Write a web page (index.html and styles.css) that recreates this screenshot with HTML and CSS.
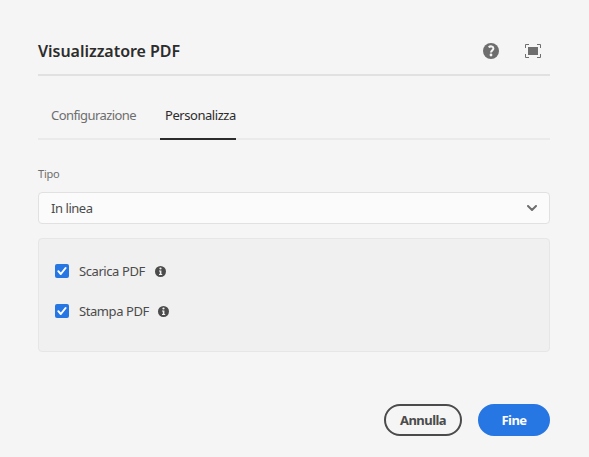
FILE: index.html
```html
<!DOCTYPE html>
<html lang="it">
<head>
<meta charset="utf-8">
<title>Visualizzatore PDF</title>
<link rel="stylesheet" href="styles.css">
</head>
<body>
<main class="dialog">
  <header class="header">
    <h1 class="title"><span>Visualizzatore PDF</span></h1>
    <div class="actions">
      <svg width="16" height="16" viewBox="0 0 16 16"><circle cx="8" cy="8" r="8" fill="#6e6e6e"/><path d="M5.6 4.2C7.5 2.8 10.4 3.2 10.4 5.5C10.4 7.4 8 7.4 8 9.5" fill="none" stroke="#f5f5f5" stroke-width="2"/><circle cx="8" cy="12" r="1.4" fill="#f5f5f5"/></svg>
      <svg width="16" height="14" viewBox="0 0 16 14"><path d="M3 3h10v8H3z" fill="#6e6e6e"/><path d="M.5 4V.5H4M12 .5h3.500V4M15.500 10v3.500H12M4 13.500H.5V10" fill="none" stroke="#6e6e6e"/></svg>
    </div>
  </header>
  <nav class="tabs">
    <a class="tab config"><span>Configurazione</span></a>
    <a class="tab active"><span>Personalizza</span></a>
  </nav>
  <label class="label">Tipo</label>
  <div class="select">
    <span>In linea</span>
    <svg width="10" height="6" viewBox="0 0 10 6"><path d="M1 1l4 4 4-4" fill="none" stroke="#6e6e6e" stroke-width="2" stroke-linecap="round" stroke-linejoin="round"/></svg>
  </div>
  <section class="panel">
    <div class="option">
      <span class="check"><svg width="14" height="14" viewBox="0 0 14 14"><path d="M3.300 7.200l2.500 2.800 4.800-6" fill="none" stroke="#fff" stroke-width="2" stroke-linecap="round" stroke-linejoin="round"/></svg></span>
      <span class="name download">Scarica PDF</span>
      <svg width="11" height="11" viewBox="0 0 11 11"><circle cx="5.500" cy="5.500" r="5.500" fill="#4b4b4b"/><circle cx="5.500" cy="2.500" r="1.100" fill="#f0f0f0"/><path d="M4 4.500h2.400V8H7.200v1H4V8h.8V5.500H4z" fill="#f0f0f0"/></svg>
    </div>
    <div class="option">
      <span class="check"><svg width="14" height="14" viewBox="0 0 14 14"><path d="M3.300 7.200l2.500 2.800 4.800-6" fill="none" stroke="#fff" stroke-width="2" stroke-linecap="round" stroke-linejoin="round"/></svg></span>
      <span class="name print">Stampa PDF</span>
      <svg width="11" height="11" viewBox="0 0 11 11"><circle cx="5.500" cy="5.500" r="5.500" fill="#4b4b4b"/><circle cx="5.500" cy="2.500" r="1.100" fill="#f0f0f0"/><path d="M4 4.500h2.400V8H7.200v1H4V8h.8V5.500H4z" fill="#f0f0f0"/></svg>
    </div>
  </section>
  <footer class="footer">
    <button class="button cancel">Annulla</button>
    <button class="button done">Fine</button>
  </footer>
</main>
</body>
</html>
```
FILE: styles.css
```css
* { box-sizing: border-box; }
body {
  margin: 0;
  height: 457px;
  background: #f5f5f5;
  color: #4b4b4b;
  font: 13px/20px "Noto Sans", sans-serif;
  overflow: hidden;
}
.dialog { width: 512px; margin-left: 38px; padding-top: 27px; }
.header {
  display: flex;
  align-items: center;
  justify-content: space-between;
  height: 49px;
  border-bottom: 2px solid #e1e1e1;
}
.title {
  margin: 0;
  color: #2c2c2c;
  font-size: 16px;
  font-weight: 600;
  letter-spacing: -0.03px;
  white-space: nowrap;
}
.actions { display: flex; align-items: center; gap: 26px; padding-right: 9px; }
.tabs {
  display: flex;
  height: 48px;
  margin-top: 16px;
  padding-left: 13px;
  border-bottom: 2px solid #eaeaea;
}
.tab { padding-top: 13px; color: #6e6e6e; white-space: nowrap; letter-spacing: -0.45px; }
.config { width: 109px; letter-spacing: -0.58px; }
.active {
  width: 76px;
  height: 48px;
  padding-left: 5px;
  color: #2c2c2c;
  border-bottom: 2px solid #2c2c2c;
}
.label {
  display: block;
  height: 20px;
  margin-top: 24px;
  color: #6e6e6e;
  font-size: 11px;
  letter-spacing: -0.2px;
}
.select {
  display: flex;
  align-items: center;
  justify-content: space-between;
  height: 32px;
  margin-top: 8px;
  padding: 0 12px;
  border: 1px solid #e1e1e1;
  border-radius: 4px;
  background: #fbfbfb;
  letter-spacing: -0.45px;
}
.panel {
  height: 114px;
  margin-top: 14px;
  padding: 22px 16px;
  border: 1px solid #e6e6e6;
  border-radius: 4px;
  background: #f0f0f0;
}
.option { display: flex; align-items: center; height: 20px; margin-bottom: 20px; }
.check { width: 14px; height: 14px; margin-right: 10px; border-radius: 2px; background: #2676e3; }
.check svg { display: block; }
.name { letter-spacing: -0.42px; white-space: nowrap; }
.download { width: 76px; }
.print { width: 79px; }
.footer { display: flex; justify-content: flex-end; gap: 16px; margin-top: 52px; }
.button {
  height: 32px;
  padding: 0;
  border: 2px solid #4b4b4b;
  border-radius: 16px;
  background: transparent;
  color: #4b4b4b;
  font: 700 13px/20px "Noto Sans", sans-serif;
  letter-spacing: -0.55px;
}
.cancel { width: 78px; }
.done { width: 72px; border-color: #2676e3; background: #2676e3; color: #fff; }
```
